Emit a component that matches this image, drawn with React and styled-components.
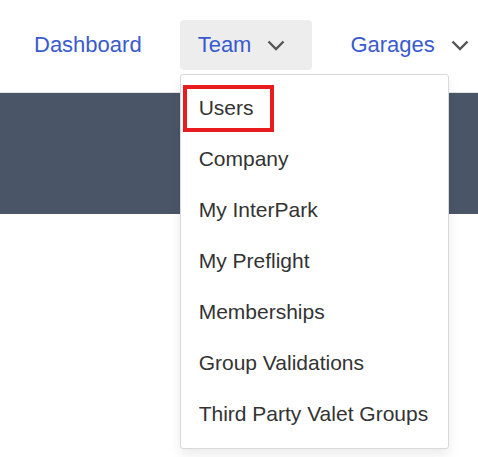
import React from "react";
import styled, { createGlobalStyle } from "styled-components";

const GlobalStyle = createGlobalStyle`
  body {
    margin: 0;
    background: #fff;
    font-family: "Liberation Sans", Arial, sans-serif;
  }
`;

const Page = styled.div`
  width: 478px;
  height: 457px;
  overflow: hidden;
  position: relative;
`;

const Nav = styled.nav`
  height: 93px;
  box-sizing: border-box;
  display: flex;
  align-items: flex-start;
  gap: 20px;
  padding: 20px 0 0 16px;
  border-bottom: 1px solid #e4e4e4;
`;

const NavItem = styled.div`
  position: relative;
  flex-shrink: 0;
  display: flex;
  align-items: center;
  gap: 16px;
  height: 50px;
  box-sizing: border-box;
  padding: 0 ${(p) => (p.$dropdown ? "27px" : "18px")} 0 18px;
  border-radius: 4px;
  background: ${(p) => (p.$open ? "#ededed" : "transparent")};
  color: #3a5bcf;
  font-size: 22px;
  white-space: nowrap;
  cursor: pointer;
`;

const Band = styled.div`
  height: 121px;
  background: #4a5568;
`;

const Menu = styled.ul`
  position: absolute;
  top: 54px;
  left: 0;
  z-index: 2;
  width: 269px;
  box-sizing: border-box;
  margin: 0;
  padding: 8px 0;
  list-style: none;
  background: #fff;
  border: 1px solid #d9d9d9;
  border-radius: 3px;
  box-shadow: 0 6px 12px rgba(0, 0, 0, 0.08);
`;

const MenuItem = styled.li`
  position: relative;
  height: 51px;
  display: flex;
  align-items: center;
  padding: 0 0 2px 18px;
  box-sizing: border-box;
  color: #333;
  font-size: 21px;
  white-space: nowrap;
`;

const Highlight = styled.span`
  position: absolute;
  left: 2px;
  top: 2px;
  width: 91px;
  height: 47px;
  box-sizing: border-box;
  border: 4px solid #e81c1f;
`;

const Chevron = () => (
  <svg width="18" height="11" viewBox="0 0 18 11" fill="none">
    <path d="M1.5 1.5 L9 9 L16.5 1.5" stroke="#555" strokeWidth="2.4" />
  </svg>
);

const teamLinks = [
  "Users",
  "Company",
  "My InterPark",
  "My Preflight",
  "Memberships",
  "Group Validations",
  "Third Party Valet Groups",
];

export default function App() {
  return (
    <Page>
      <GlobalStyle />
      <Nav>
        <NavItem>Dashboard</NavItem>
        <NavItem $dropdown $open>
          Team
          <Chevron />
          <Menu>
            {teamLinks.map((label, i) => (
              <MenuItem key={label}>
                {i === 0 && <Highlight />}
                {label}
              </MenuItem>
            ))}
          </Menu>
        </NavItem>
        <NavItem $dropdown>
          Garages
          <Chevron />
        </NavItem>
      </Nav>
      <Band />
    </Page>
  );
}
